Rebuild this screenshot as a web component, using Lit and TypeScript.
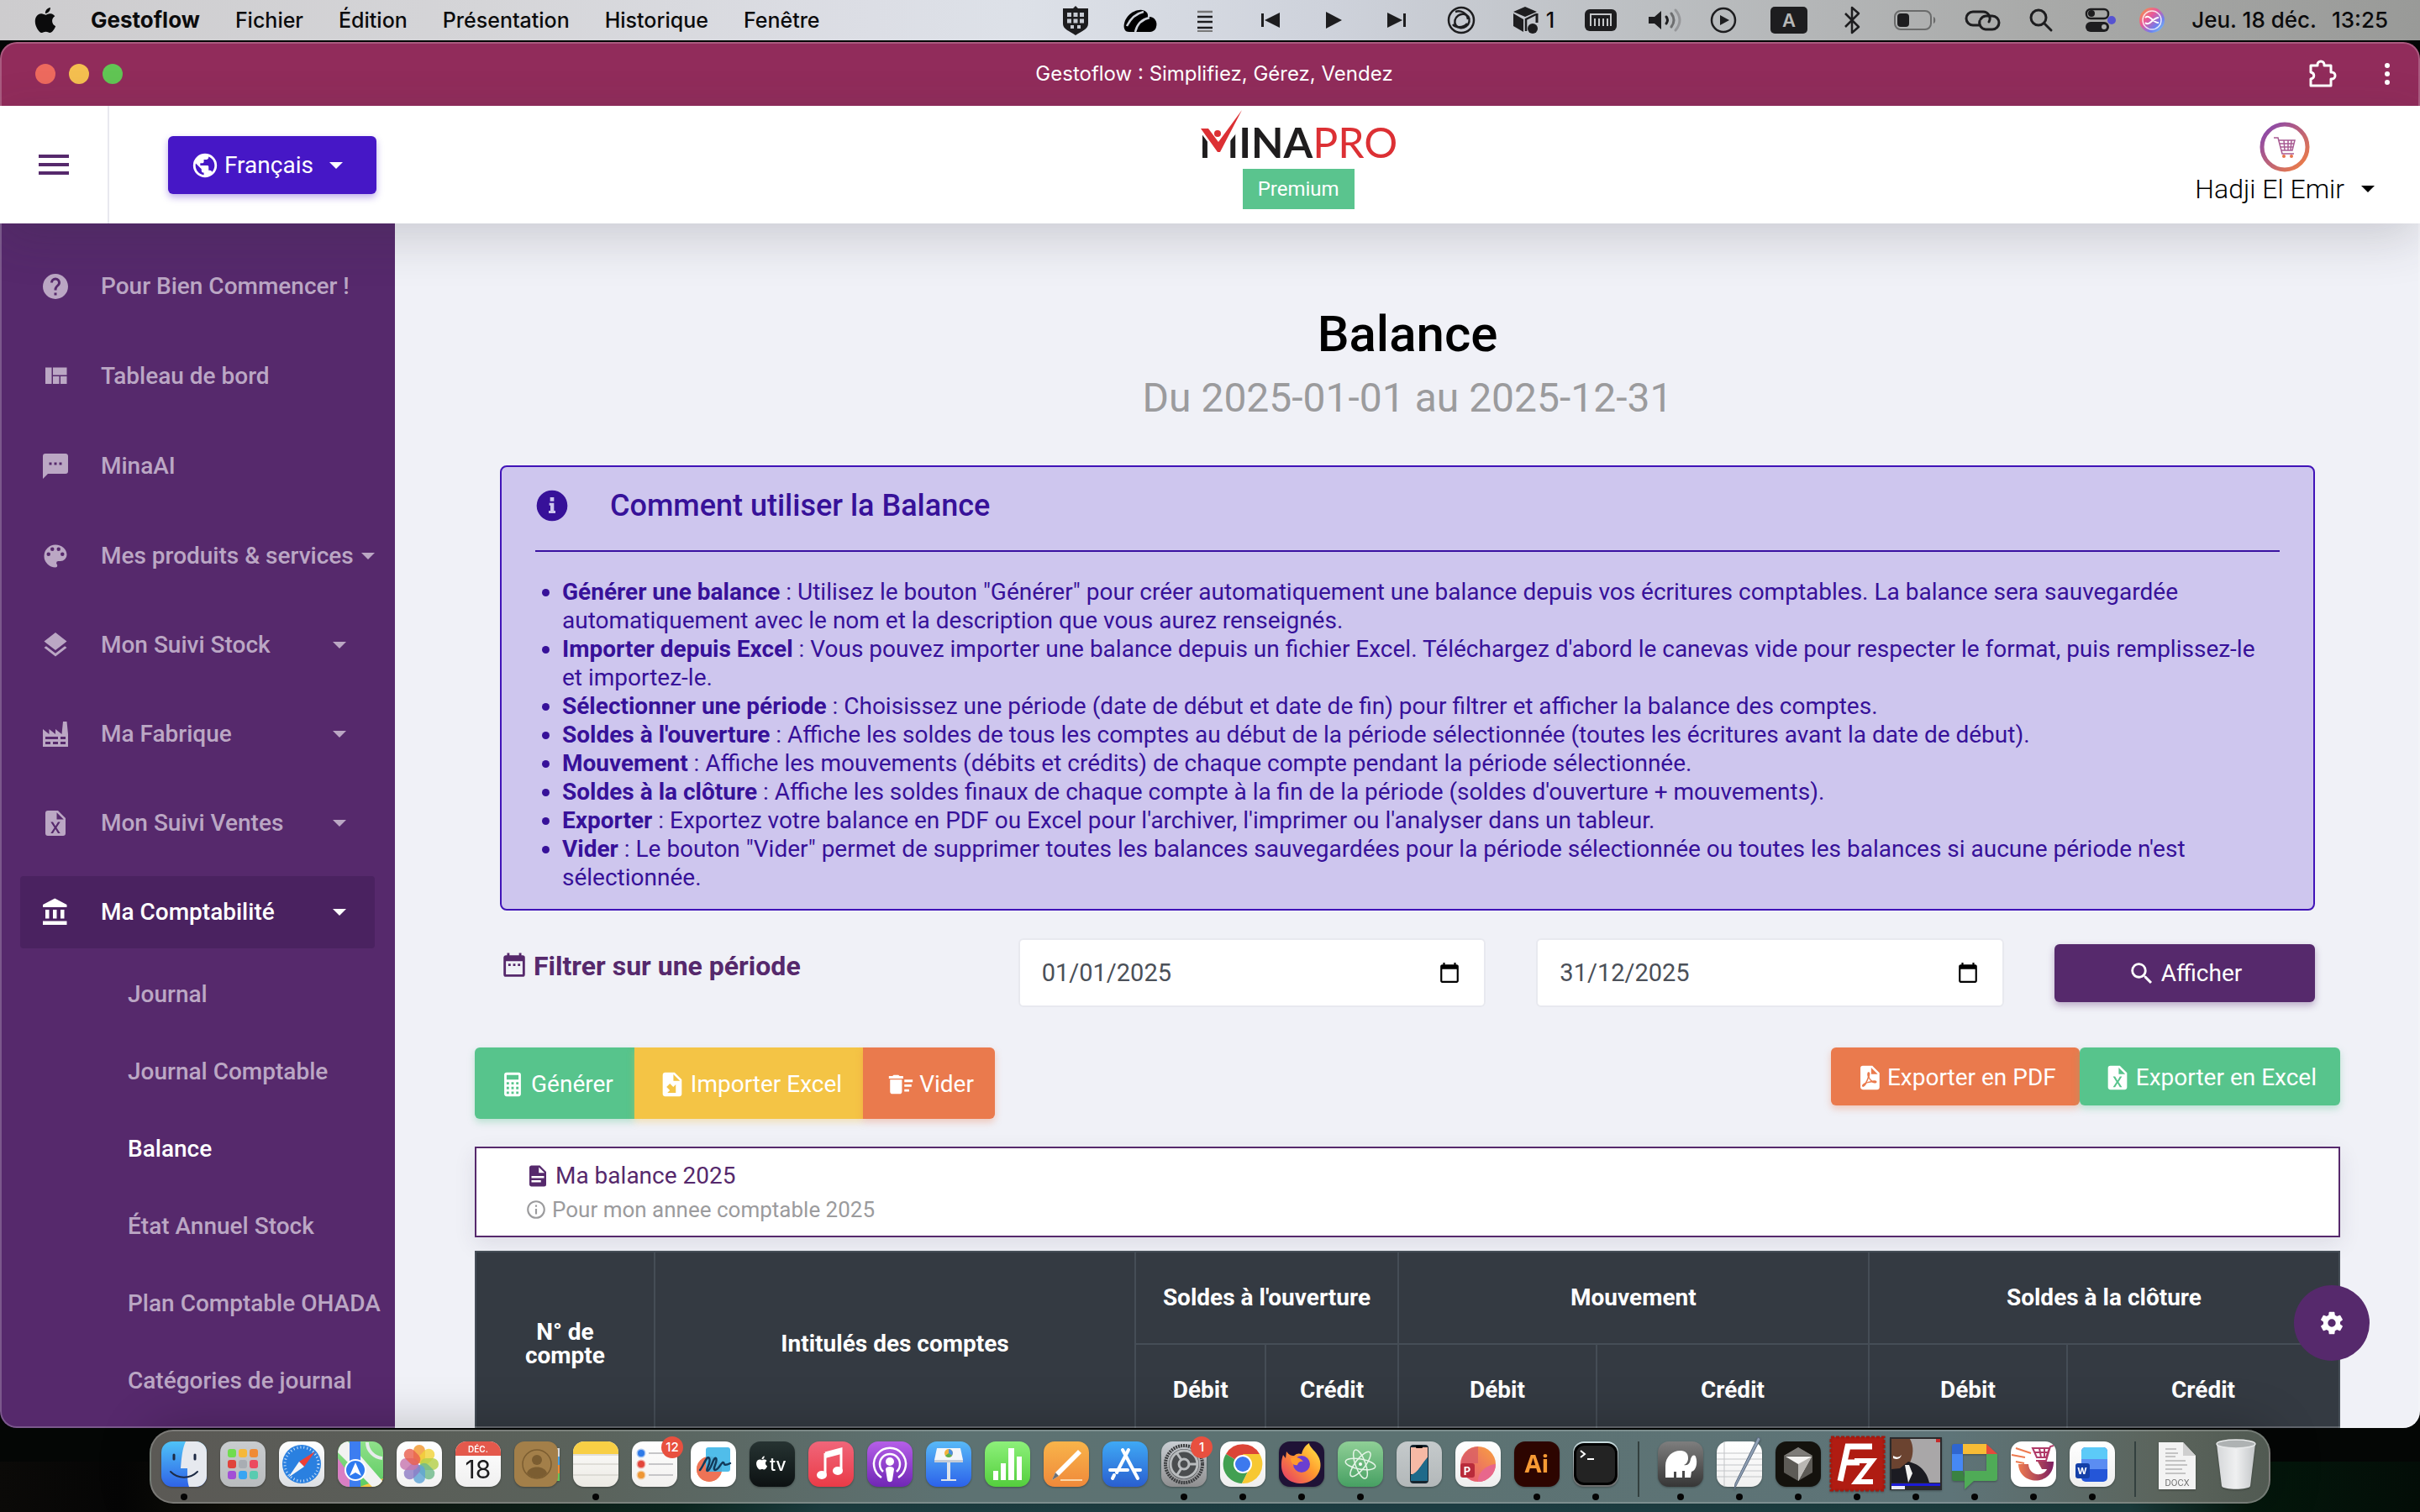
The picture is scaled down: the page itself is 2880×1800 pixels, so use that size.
import { LitElement, html, css, svg, nothing, type TemplateResult, type SVGTemplateResult } from "lit";
import { customElement } from "lit/decorators.js";
import { classMap } from "lit/directives/class-map.js";

/* ---------- Shared icon set (24 x 24 grid) ---------- */

const ICONS: Record<string, string> = {
  help: "M15.07,11.25L14.17,12.17C13.45,12.89 13,13.5 13,15H11V14.5C11,13.39 11.45,12.39 12.17,11.67L13.41,10.41C13.78,10.05 14,9.55 14,9C14,7.89 13.1,7 12,7A2,2 0 0,0 10,9H8A4,4 0 0,1 12,5A4,4 0 0,1 16,9C16,9.88 15.64,10.67 15.07,11.25M13,19H11V17H13M12,2A10,10 0 0,0 2,12A10,10 0 0,0 12,22A10,10 0 0,0 22,12C22,6.47 17.5,2 12,2Z",
  quilt: "M10,5V11H21V5M16,18H21V12H16M4,18H9V5H4M10,18H15V12H10V18Z",
  chat: "M17,11H15V9H17M13,11H11V9H13M9,11H7V9H9M20,2H4A2,2 0 0,0 2,4V22L6,18H20A2,2 0 0,0 22,16V4C22,2.89 21.1,2 20,2Z",
  palette: "M17.5,12A1.5,1.5 0 0,1 16,10.5A1.5,1.5 0 0,1 17.5,9A1.5,1.5 0 0,1 19,10.5A1.5,1.5 0 0,1 17.5,12M14.5,8A1.5,1.5 0 0,1 13,6.5A1.5,1.5 0 0,1 14.5,5A1.5,1.5 0 0,1 16,6.5A1.5,1.5 0 0,1 14.5,8M9.5,8A1.5,1.5 0 0,1 8,6.5A1.5,1.5 0 0,1 9.5,5A1.5,1.5 0 0,1 11,6.5A1.5,1.5 0 0,1 9.5,8M6.5,12A1.5,1.5 0 0,1 5,10.5A1.5,1.5 0 0,1 6.5,9A1.5,1.5 0 0,1 8,10.5A1.5,1.5 0 0,1 6.5,12M12,3A9,9 0 0,0 3,12A9,9 0 0,0 12,21A1.5,1.5 0 0,0 13.5,19.5C13.5,19.11 13.35,18.76 13.11,18.5C12.88,18.23 12.73,17.88 12.73,17.5A1.5,1.5 0 0,1 14.23,16H16A5,5 0 0,0 21,11C21,6.58 16.97,3 12,3Z",
  layers: "M12,16L19.36,10.27L21,9L12,2L3,9L4.63,10.27M12,18.54L4.62,12.81L3,14.07L12,21.07L21,14.07L19.37,12.8L12,18.54Z",
  factory: "M4,18V20H8V18H4M4,14V16H14V14H4M10,18V20H14V18H10M16,14V16H20V14H16M16,18V20H20V18H16M2,22V8L7,12V8L12,12V8L17,12L18,2H21L22,12V22H2Z",
  excel: "M14,2H6A2,2 0 0,0 4,4V20A2,2 0 0,0 6,22H18A2,2 0 0,0 20,20V8L14,2M15.8,20H14L12,16.6L10,20H8.2L11.1,15.5L8.2,11H10L12,14.4L14,11H15.8L12.9,15.5L15.8,20M13,9V3.5L18.5,9H13Z",
  bank: "M11.5,1L2,6V8H21V6M16,10V17H19V10M2,22H21V19H2M10,10V17H13V10M4,10V17H7V10H4Z",
  earth: "M17.9,17.39C17.64,16.59 16.89,16 16,16H15V13A1,1 0 0,0 14,12H8V10H10A1,1 0 0,0 11,9V7H13A2,2 0 0,0 15,5V4.59C17.93,5.77 20,8.64 20,12C20,14.08 19.2,15.97 17.9,17.39M11,19.93C7.05,19.44 4,16.08 4,12C4,11.38 4.08,10.78 4.21,10.21L9,15V16A2,2 0 0,0 11,18M12,2A10,10 0 0,0 2,12A10,10 0 0,0 12,22A10,10 0 0,0 22,12A10,10 0 0,0 12,2Z",
  info: "M10.6,6H13.4V8.8H10.6ZM10,10H13.4V15.6H14.4V17.4H9.6V15.6H10.8V11.8H10ZM12,1A11,11 0 0,0 1,12A11,11 0 0,0 12,23A11,11 0 0,0 23,12A11,11 0 0,0 12,1Z",
  infoOutline: "M11,9H13V7H11M12,20C7.59,20 4,16.41 4,12C4,7.59 7.59,4 12,4C16.41,4 20,7.59 20,12C20,16.41 16.41,20 12,20M12,2A10,10 0 0,0 2,12A10,10 0 0,0 12,22A10,10 0 0,0 22,12A10,10 0 0,0 12,2M11,17H13V11H11V17Z",
  calendar: "M9,10H7V12H9V10M13,10H11V12H13V10M17,10H15V12H17V10M19,3H18V1H16V3H8V1H6V3H5C3.89,3 3,3.9 3,5V19A2,2 0 0,0 5,21H19A2,2 0 0,0 21,19V5A2,2 0 0,0 19,3M19,19H5V8H19V19Z",
  datePicker: "M20,3H19V1H17V3H7V1H5V3H4C2.9,3 2,3.9 2,5V21C2,22.1 2.9,23 4,23H20C21.1,23 22,22.1 22,21V5C22,3.9 21.1,3 20,3M20,21H4V8H20V21Z",
  search: "M9.5,3A6.5,6.5 0 0,1 16,9.5C16,11.11 15.41,12.59 14.44,13.73L14.71,14H15.5L20.5,19L19,20.5L14,15.5V14.71L13.73,14.44C12.59,15.41 11.11,16 9.5,16A6.5,6.5 0 0,1 3,9.5A6.5,6.5 0 0,1 9.5,3M9.5,5C7,5 5,7 5,9.5C5,12 7,14 9.5,14C12,14 14,12 14,9.5C14,7 12,5 9.5,5Z",
  calculator: "M7,2H17A2,2 0 0,1 19,4V20A2,2 0 0,1 17,22H7A2,2 0 0,1 5,20V4A2,2 0 0,1 7,2M7,4V8H17V4H7M7,10V12H9V10H7M11,10V12H13V10H11M15,10V12H17V10H15M7,14V16H9V14H7M11,14V16H13V14H11M15,14V16H17V14H15M7,18V20H9V18H7M11,18V20H13V18H11M15,18V20H17V18H15Z",
  fileImport: "M6,2C4.89,2 4,2.9 4,4V20A2,2 0 0,0 6,22H18A2,2 0 0,0 20,20V8L14,2M13,3.5L18.5,9H13M10.05,11.22L12.88,14.05L15,11.93V19H7.93L10.05,16.88L7.22,14.05",
  sweep: "M15,16H19V18H15V16M15,8H22V10H15V8M15,12H21V14H15V12M3,18A2,2 0 0,0 5,20H11A2,2 0 0,0 13,18V8H3V18M14,5H11L10,4H6L5,5H2V7H14V5Z",
  pdf: "M14,9H19.5L14,3.5V9M7,2H15L21,8V20A2,2 0 0,1 19,22H7C5.89,22 5,21.1 5,20V4A2,2 0 0,1 7,2M11.93,12.44C12.34,13.34 12.86,14.08 13.46,14.59L13.87,14.91C13,15.07 11.8,15.35 10.53,15.84L10.42,15.88L10.92,14.84C11.37,13.97 11.7,13.18 11.93,12.44M18.41,16.25C18.59,16.07 18.68,15.84 18.69,15.59C18.72,15.39 18.67,15.2 18.57,15.04C18.28,14.57 17.53,14.35 16.29,14.35L15,14.42L14.13,13.84C13.5,13.32 12.93,12.41 12.53,11.28L12.57,11.14C12.9,9.81 13.21,8.2 12.55,7.54C12.39,7.38 12.17,7.3 11.94,7.3H11.7C11.33,7.3 11,7.69 10.91,8.07C10.54,9.4 10.76,10.13 11.13,11.34C10.88,12.23 10.56,13.25 10.05,14.28L9.09,16.08L8.2,16.57C7,17.32 6.43,18.16 6.32,18.69C6.28,18.88 6.3,19.05 6.37,19.23L6.4,19.28L6.88,19.59L7.32,19.7C8.13,19.7 9.05,18.75 10.29,16.63L10.47,16.56C11.5,16.23 12.78,16 14.5,15.81C15.53,16.32 16.74,16.55 17.5,16.55C17.94,16.55 18.24,16.44 18.41,16.25Z",
  document: "M13,9H18.5L13,3.5V9M6,2H14L20,8V20A2,2 0 0,1 18,22H6C4.89,22 4,21.1 4,20V4C4,2.89 4.89,2 6,2M15,18V16H6V18H15M18,14V12H6V14H18Z",
  gear: "M12,15.5A3.5,3.5 0 0,1 8.5,12A3.5,3.5 0 0,1 12,8.5A3.5,3.5 0 0,1 15.5,12A3.5,3.5 0 0,1 12,15.5M19.43,12.97C19.47,12.65 19.5,12.33 19.5,12C19.5,11.67 19.47,11.34 19.43,11L21.54,9.37C21.73,9.22 21.78,8.95 21.66,8.73L19.66,5.27C19.54,5.05 19.27,4.96 19.05,5.05L16.56,6.05C16.04,5.66 15.5,5.32 14.87,5.07L14.5,2.42C14.46,2.18 14.25,2 14,2H10C9.75,2 9.54,2.18 9.5,2.42L9.13,5.07C8.5,5.32 7.96,5.66 7.44,6.05L4.95,5.05C4.73,4.96 4.46,5.05 4.34,5.27L2.34,8.73C2.21,8.95 2.27,9.22 2.46,9.37L4.57,11C4.53,11.34 4.5,11.67 4.5,12C4.5,12.33 4.53,12.65 4.57,12.97L2.46,14.63C2.27,14.78 2.21,15.05 2.34,15.27L4.34,18.73C4.46,18.95 4.73,19.03 4.95,18.95L7.44,17.94C7.96,18.34 8.5,18.68 9.13,18.93L9.5,21.58C9.54,21.82 9.75,22 10,22H14C14.25,22 14.46,21.82 14.5,21.58L14.87,18.93C15.5,18.67 16.04,18.34 16.56,17.94L19.05,18.95C19.27,19.03 19.54,18.95 19.66,18.73L21.66,15.27C21.78,15.05 21.73,14.78 21.54,14.63L19.43,12.97Z",
  apple: "M18.71,19.5C17.88,20.74 17,21.95 15.66,21.97C14.32,22 13.89,21.18 12.37,21.18C10.84,21.18 10.37,21.95 9.1,22C7.79,22.05 6.8,20.68 5.96,19.47C4.25,17 2.94,12.45 4.7,9.39C5.57,7.87 7.13,6.91 8.82,6.88C10.1,6.86 11.32,7.75 12.11,7.75C12.89,7.75 14.37,6.68 15.92,6.84C16.57,6.87 18.39,7.1 19.56,8.82C19.47,8.88 17.39,10.1 17.41,12.63C17.44,15.65 20.06,16.66 20.09,16.67C20.06,16.74 19.67,18.11 18.71,19.5M13,3.5C13.73,2.67 14.94,2.04 15.94,2C16.07,3.17 15.6,4.35 14.9,5.19C14.21,6.04 13.07,6.7 11.95,6.61C11.8,5.46 12.36,4.26 13,3.5Z",
};

const icon = (name: string, size: number) => html`
  <svg class="icon" width=${size} height=${size} viewBox="0 0 24 24" aria-hidden="true">
    <path fill="currentColor" fill-rule="evenodd" d=${ICONS[name]}></path>
  </svg>`;

const base = css`
  *, *::before, *::after { box-sizing: border-box; }
  button { font: inherit; color: inherit; background: none; border: 0; padding: 0; cursor: pointer; }
  a { color: inherit; text-decoration: none; }
  svg { display: block; flex: none; overflow: visible; }
  ul { list-style: none; margin: 0; padding: 0; }
  .caret { flex: none; border: 8px solid transparent; border-top-color: currentColor; border-bottom: 0; }
`;

/* ---------- System menu bar ---------- */

interface TrayItem { label: string; width: number; art: SVGTemplateResult; text?: string; }

const TRAY: TrayItem[] = [
  { label: "Protection", width: 44, art: svg`
      <path d="M22 7l3 3h12v18c0 7-8 9-15 14c-7-5-15-7-15-14V10h12z" fill="#1d1d1f"/>
      <path d="M12 15h5v5h-5zM19.500 15h5v5h-5zM27 15h5v5h-5zM12 22.500h5v5h-5zM19.500 22.500h5v5h-5zM27 22.500h5v5h-5zM16 30h4v4h-4zM24 30h4v4h-4z" fill="#c6cad2"/>` },
  { label: "Synchronisation", width: 46, art: svg`
      <path d="M4 34C2 25 10 13 22 12c6-1 11 3 10 8c8-1 12 6 10 12c-1 4-4 6-9 6H10c-3 0-5-1-6-4z" fill="#000"/>
      <path d="M7 31C12 21 18 16 27 14M17 38c2-9 8-15 17-17" stroke="#cfd3da" stroke-width="2.500" fill="none"/>` },
  { label: "Liste", width: 44, art: svg`
      <path d="M13 14h18" stroke="#777" stroke-width="2.500"/><path d="M13 20h18M13 26h18M13 33h18" stroke="#1d1d1f" stroke-width="2.500"/><path d="M13 37h18" stroke="#777" stroke-width="2"/>` },
  { label: "Piste précédente", width: 48, art: svg`<path d="M13 16h3v16h-3zM35 15v18L17 24z" fill="#1d1d1f"/>` },
  { label: "Lecture", width: 38, art: svg`<path d="M10 14v20l19-10z" fill="#1d1d1f"/>` },
  { label: "Piste suivante", width: 48, art: svg`<path d="M32 16h3v16h-3zM13 15v18l18-9z" fill="#1d1d1f"/>` },
  { label: "Creative Cloud", width: 42, art: svg`
      <g fill="none" stroke="#1d1d1f" stroke-width="2.500"><circle cx="21" cy="24" r="15"/><ellipse cx="22" cy="25" rx="9" ry="8" transform="rotate(-35 22 25)"/><path d="M11 29c3 4 12 5 17-1M14 14c6-2 14 1 15 9"/></g>` },
  { label: "Conteneurs", width: 44, text: "1", art: svg`
      <g transform="translate(6 0)"><path d="M17 8l14 6l-14 6L3 14zM3 16l12 7v15L3 31z" fill="#1d1d1f"/><path d="M31 16v11" stroke="#1d1d1f" stroke-width="3"/><path d="M30 17l-12 6v14" fill="none" stroke="#1d1d1f" stroke-width="2.500"/><circle cx="26" cy="34" r="6" fill="#1d1d1f"/></g>` },
  { label: "Clavier", width: 46, art: svg`
      <rect x="4" y="11" width="38" height="26" rx="6" fill="#1d1d1f"/><path d="M11 31V17h24v14M16 22v9M21 22v9M26 22v9M31 22v9" fill="none" stroke="#c4c6c8" stroke-width="2"/>` },
  { label: "Volume", width: 42, art: svg`
      <path d="M2 20h7l8-7v22l-8-7H2z" fill="#1d1d1f"/><g fill="none" stroke-width="3" stroke-linecap="round"><path d="M23 20q3 4 0 8" stroke="#1d1d1f"/><path d="M29 16q6 8 0 16" stroke="#6d6e70"/><path d="M34 12q10 12 0 24" stroke="#96979a"/></g>` },
  { label: "Lecture en cours", width: 34, art: svg`
      <circle cx="17" cy="24" r="14" fill="none" stroke="#1d1d1f" stroke-width="2.500"/><path d="M13 18v12l11-6z" fill="#1d1d1f"/>` },
  { label: "Saisie", width: 58, art: svg`
      <rect x="7" y="8" width="44" height="32" rx="5" fill="#1d1d1f"/><text x="29" y="32" text-anchor="middle" font-family="Inter, sans-serif" font-size="22" font-weight="600" fill="#b6b7b7">A</text>` },
  { label: "Bluetooth", width: 28, art: svg`<path d="M6 16l16 16l-8 7V9l8 7L6 32" fill="none" stroke="#1d1d1f" stroke-width="2.500" stroke-linejoin="round"/>` },
  { label: "Batterie", width: 56, art: svg`
      <rect x="5" y="13" width="43" height="22" rx="7" fill="none" stroke="#6a6b6b" stroke-width="2"/><rect x="8" y="16" width="14" height="16" rx="4" fill="#1d1d1f"/><path d="M51 20c3 1 3 7 0 8z" fill="#6a6b6b"/>` },
  { label: "Partage", width: 42, art: svg`
      <g fill="none" stroke="#1d1d1f" stroke-width="3" stroke-linecap="round"><path d="M17 30h-7a8 8 0 0 1 0-16h12a8 8 0 0 1 7 12"/><path d="M18 25a8 8 0 0 0 7 10h8a8 8 0 0 0 0-16h-8a8 8 0 0 0-6 4"/></g>` },
  { label: "Rechercher", width: 32, art: svg`<circle cx="14" cy="21" r="9" fill="none" stroke="#1d1d1f" stroke-width="3"/><path d="M21 28l8 8" stroke="#1d1d1f" stroke-width="3" stroke-linecap="round"/>` },
  { label: "Centre de contrôle", width: 38, art: svg`
      <rect x="7" y="11" width="26" height="11" rx="5" fill="none" stroke="#1d1d1f" stroke-width="2.500"/><circle cx="13" cy="16" r="4" fill="#1d1d1f"/><rect x="6" y="26" width="28" height="12" rx="6" fill="#1d1d1f"/><circle cx="28" cy="32" r="3" fill="#aeafae"/><circle cx="37" cy="24" r="5" fill="#5653d1"/>` },
  { label: "Siri", width: 30, art: svg`
      <defs><linearGradient id="siri" x1="0" y1="0" x2="1" y2="1"><stop offset="0" stop-color="#f6a13c"/><stop offset=".4" stop-color="#e8589a"/><stop offset=".7" stop-color="#6d7ff0"/><stop offset="1" stop-color="#7fdcf2"/></linearGradient></defs>
      <circle cx="15" cy="24" r="15" fill="url(#siri)"/><circle cx="15" cy="24" r="11" fill="none" stroke="#fff" stroke-width="1.500" opacity=".8"/><path d="M7 21c5-5 10 7 16 6M7 27c5 5 10-7 16-6" stroke="#fff" stroke-width="2" fill="none"/>` },
];

@customElement("menu-bar")
export class MenuBar extends LitElement {
  static styles = [base, css`
    :host {
      display: flex; align-items: center; justify-content: space-between; height: 48px; padding: 0 38px 0 36px;
      font: 500 25px/48px Inter, "Liberation Sans", sans-serif; color: #0b0b0c; white-space: nowrap;
      background: linear-gradient(90deg, #cdccce 0%, #d5d5d8 20%, #dcdee5 36%, #dde1e8 42%, #ced2db 55%, #bcbfc2 68%, #a9aaa9 84%, #999a98 100%);
    }
    nav, .tray, .menus { display: flex; align-items: center; }
    nav { gap: 36px; }
    .menus { gap: 42px; }
    .app { font-weight: 700; font-size: 26px; }
    .tray { gap: 32px; }
    .item { display: flex; align-items: center; gap: 4px; }
    .clock { display: flex; gap: 18px; font-size: 26px; }
  `];

  render() {
    return html`
      <nav aria-label="Menu">
        <button aria-label="Apple">${icon("apple", 36)}</button>
        <div class="menus">
          <button class="app">Gestoflow</button>
          ${["Fichier", "Édition", "Présentation", "Historique", "Fenêtre"].map((m) => html`<button>${m}</button>`)}
        </div>
      </nav>
      <div class="tray">
        ${TRAY.map((t) => html`
          <button class="item" aria-label=${t.label}>
            <svg width=${t.width} height="48" viewBox="0 0 ${t.width} 48" aria-hidden="true">${t.art}</svg>${t.text ? html`<span>${t.text}</span>` : nothing}
          </button>`)}
        <time class="clock"><span>Jeu. 18 déc.</span><span>13:25</span></time>
      </div>`;
  }
}

/* ---------- Sidebar ---------- */

interface NavEntry { label: string; icon: string; group?: boolean; open?: boolean; }

const NAV: NavEntry[] = [
  { label: "Pour Bien Commencer !", icon: "help" },
  { label: "Tableau de bord", icon: "quilt" },
  { label: "MinaAI", icon: "chat" },
  { label: "Mes produits & services", icon: "palette", group: true },
  { label: "Mon Suivi Stock", icon: "layers", group: true },
  { label: "Ma Fabrique", icon: "factory", group: true },
  { label: "Mon Suivi Ventes", icon: "excel", group: true },
  { label: "Ma Comptabilité", icon: "bank", group: true, open: true },
];

const SUBNAV = ["Journal", "Journal Comptable", "Balance", "État Annuel Stock", "Plan Comptable OHADA", "Catégories de journal"];

@customElement("side-nav")
export class SideNav extends LitElement {
  static styles = [base, css`
    :host { display: block; padding: 32px 24px 0; background: #56296c; color: #bba7c4; font: 500 28px/36px Roboto, sans-serif; white-space: nowrap; }
    li { margin-bottom: 21px; }
    li.group { margin-bottom: 20px; }
    .entry { display: flex; align-items: center; height: 86px; padding: 0 34px 0 24px; border-radius: 4px; }
    .entry .icon { margin-right: 36px; }
    .entry .caret { margin-left: auto; }
    .entry.tight { justify-content: space-between; padding-right: 0; }
    .entry.open { background: #4a2260; color: #fff; }
    .entry .text { display: flex; align-items: center; }
    .sub { padding-left: 128px; }
    .sub li { margin: 0; }
    .sub a { display: block; height: 92px; line-height: 92px; }
    .sub.list { margin-top: 9px; }
    .sub .current { color: #fff; }
  `];

  render() {
    return html`
      <nav aria-label="Navigation principale">
        <ul>
          ${NAV.map((n) => html`
            <li class=${classMap({ group: !!n.group })}>
              <a href="#" class=${classMap({ entry: true, open: !!n.open, tight: n.label.length > 22 })}>
                <span class="text">${icon(n.icon, 36)}${n.label}</span>${n.group ? html`<span class="caret"></span>` : nothing}
              </a>
              ${n.open ? html`
                <ul class="sub list">
                  ${SUBNAV.map((s) => html`<li><a href="#" class=${classMap({ current: s === "Balance" })}>${s}</a></li>`)}
                </ul>` : nothing}
            </li>`)}
        </ul>
      </nav>`;
  }
}

/* ---------- Application header ---------- */

@customElement("app-header")
export class AppHeader extends LitElement {
  static styles = [base, css`
    :host { position: relative; z-index: 1; display: flex; align-items: stretch; height: 140px; background: #fff; box-shadow: 0 16px 60px rgba(50, 50, 60, .2); font: 400 28px/40px Roboto, sans-serif; }
    .toggle { display: grid; place-content: center; gap: 6px; width: 130px; padding-top: 0; border-right: 2px solid #e8e8ef; }
    .toggle i { width: 36px; height: 4px; background: #56296c; }
    .lang { display: flex; align-items: center; gap: 6px; align-self: center; height: 69px; margin-left: 70px; padding: 2px 40px 0 27px; border-radius: 6px; background: #4617c6; color: #fff; box-shadow: 0 4px 8px rgba(70, 23, 198, .35); }
    .lang .caret { margin-left: 13px; }
    .brand { display: flex; flex-direction: column; align-items: center; margin: 0 auto; padding: 11px 0 0 30px; }
    .logo { position: relative; font: 700 50px/64px Lato, sans-serif; color: #1f1d1e; }
    .logo .pro { font-weight: 400; color: #dc3034; }
    .logo svg { position: absolute; left: 0; top: -5px; }
    .badge { padding: 0 18px; background: #5ac48e; color: #fff; font-size: 24px; line-height: 48px; }
    .user { display: flex; flex-direction: column; align-items: center; align-self: center; margin: 0 54px 3px 0; }
    .name { display: flex; align-items: center; gap: 20px; font-size: 32px; font-weight: 300; color: #000; }
  `];

  render() {
    return html`
      <button class="toggle" aria-label="Menu"><i></i><i></i><i></i></button>
      <button class="lang">${icon("earth", 34)}<span>Français</span><span class="caret"></span></button>
      <div class="brand">
        <div class="logo">MINA<span class="pro">PRO</span>
          <svg width="52" height="64" viewBox="0 0 52 64" aria-hidden="true">
            <path d="M2 18H44V27L36 37V58H11V38L2 26Z" fill="#fff"/>
            <path d="M2 21h9l12 16L51-1L25 49h-3z" fill="#dc3034"/>
            <circle cx="22" cy="27" r="4" fill="#dc3034"/>
          </svg>
        </div>
        <span class="badge">Premium</span>
      </div>
      <button class="user">
        <svg width="60" height="60" viewBox="0 0 60 60" aria-hidden="true">
          <defs><linearGradient id="ring" x1="0" y1="0" x2="1" y2="1"><stop offset="0" stop-color="#8143b4"/><stop offset="1" stop-color="#f5813f"/></linearGradient></defs>
          <circle cx="30" cy="30" r="27" fill="#fff" stroke="url(#ring)" stroke-width="5"/>
          <g fill="none" stroke="#a85a92" stroke-width="1.500"><path d="M17 19h5l5 19h14"/><path d="M23 22h19l-3 12H26M24 26h17M25 30h15M29 22l1 12M34 22v12M38 22l-1 12"/></g>
          <circle cx="29" cy="41" r="2" fill="#e8734a"/><circle cx="38" cy="41" r="2" fill="#e8734a"/>
        </svg>
        <span class="name">Hadji El Emir <span class="caret"></span></span>
      </button>`;
  }
}

/* ---------- Balance page ---------- */

const HELP: [string, string][] = [
  ["Générer une balance", "Utilisez le bouton \"Générer\" pour créer automatiquement une balance depuis vos écritures comptables. La balance sera sauvegardée automatiquement avec le nom et la description que vous aurez renseignés."],
  ["Importer depuis Excel", "Vous pouvez importer une balance depuis un fichier Excel. Téléchargez d'abord le canevas vide pour respecter le format, puis remplissez-le et importez-le."],
  ["Sélectionner une période", "Choisissez une période (date de début et date de fin) pour filtrer et afficher la balance des comptes."],
  ["Soldes à l'ouverture", "Affiche les soldes de tous les comptes au début de la période sélectionnée (toutes les écritures avant la date de début)."],
  ["Mouvement", "Affiche les mouvements (débits et crédits) de chaque compte pendant la période sélectionnée."],
  ["Soldes à la clôture", "Affiche les soldes finaux de chaque compte à la fin de la période (soldes d'ouverture + mouvements)."],
  ["Exporter", "Exportez votre balance en PDF ou Excel pour l'archiver, l'imprimer ou l'analyser dans un tableur."],
  ["Vider", "Le bouton \"Vider\" permet de supprimer toutes les balances sauvegardées pour la période sélectionnée ou toutes les balances si aucune période n'est sélectionnée."],
];

@customElement("balance-page")
export class BalancePage extends LitElement {
  static styles = [base, css`
    :host { display: block; padding: 96px 95px 0; background: #f0f1f7; font: 400 28px/34px Roboto, sans-serif; color: #4b5058; }
    h1 { margin: 0 0 11px; font-size: 60px; line-height: 72px; font-weight: 500; color: #000; text-align: center; }
    .range { margin: 0 0 51px; font-size: 48px; line-height: 58px; text-align: center; color: #9b9b9d; }
    .help { margin: 0 30px; padding: 24px 40px 20px; border: 2px solid #4013b8; border-radius: 8px; background: #cec6ee; color: #371199; }
    .help h2 { display: flex; align-items: center; gap: 49px; margin: 0; padding-bottom: 31px; border-bottom: 2px solid #3a12a0; font-size: 36px; line-height: 44px; font-weight: 500; }
    .help ul { list-style: disc; margin-top: 31px; padding-left: 32px; }
    .filter { display: grid; grid-template-columns: repeat(3, 10fr) 6fr; align-items: center; margin-top: 33px; }
    .filter > * { margin: 0 30px; }
    .title { display: flex; align-items: center; gap: 6px; align-self: start; font-size: 32px; line-height: 66px; font-weight: 700; color: #56296c; }
    .date { display: flex; align-items: center; height: 82px; padding: 0 28px 0 26px; border: 2px solid #e8e9ef; border-radius: 6px; background: #fff; }
    .date input { flex: 1; min-width: 0; border: 0; padding: 0; background: none; font: inherit; font-size: 29px; color: #4b5058; outline: 0; }
    .date button { color: #000; }
    .btn { display: flex; align-items: center; justify-content: center; gap: 5px; height: 69px; padding: 2px 28px 0; border-radius: 6px; color: #fff; white-space: nowrap; }
    .purple { background: #56296c; box-shadow: 0 4px 8px rgba(86, 41, 108, .35); gap: 6px; }
    .green { background: #57c48c; box-shadow: 0 4px 8px rgba(87, 196, 140, .35); }
    .yellow { background: #f4c445; box-shadow: 0 4px 8px rgba(244, 196, 69, .35); }
    .orange { background: #ea7a4d; box-shadow: 0 4px 8px rgba(234, 122, 77, .35); }
    .actions { display: flex; justify-content: space-between; align-items: flex-start; margin-top: 48px; }
    .set { display: flex; }
    .joined .btn { height: 85px; border-radius: 0; padding: 2px 25px 0 28px; }
    .joined .btn:first-child { border-radius: 6px 0 0 6px; }
    .joined .btn:last-child { border-radius: 0 6px 6px 0; }
    .card { margin-top: 33px; padding: 13px 58px 11px; border: 2px solid #56296c; background: #fff; box-shadow: 0 8px 24px rgba(60, 50, 80, .1); line-height: 40px; }
    .card div { display: flex; align-items: center; gap: 6px; }
    .card .name { color: #56296c; }
    .card .note { color: #9b9b9d; font-size: 26px; }
    table { width: 100%; margin-top: 16px; table-layout: fixed; border-collapse: collapse; background: #343a42; color: #fff; position: relative; }
    th { height: 110px; padding: 0 24px; border: 2px solid #454d56; font-weight: 700; font-size: 28px; line-height: 28px; text-align: center; }
    .c1 { width: 9.6%; } .c2 { width: 25.8%; } .c3 { width: 7%; } .c4 { width: 7.1%; } .c5, .c7 { width: 10.65%; } .c6 { width: 14.6%; }
  `];

  private dateField(id: string, label: string, value: string): TemplateResult {
    return html`
      <div class="date">
        <input id=${id} type="text" inputmode="numeric" aria-label=${label} .value=${value}>
        <button type="button" aria-label="Ouvrir le calendrier">${icon("datePicker", 26)}</button>
      </div>`;
  }

  render() {
    return html`
      <h1>Balance</h1>
      <p class="range">Du 2025-01-01 au 2025-12-31</p>
      <section class="help">
        <h2>${icon("info", 40)}Comment utiliser la Balance</h2>
        <ul>${HELP.map(([k, v]) => html`<li><b>${k}</b> : ${v}</li>`)}</ul>
      </section>
      <form class="filter">
        <label class="title" for="from">${icon("calendar", 34)}Filtrer sur une période</label>
        ${this.dateField("from", "Date de début", "01/01/2025")}
        ${this.dateField("to", "Date de fin", "31/12/2025")}
        <button class="btn purple" type="button">${icon("search", 34)}Afficher</button>
      </form>
      <div class="actions">
        <div class="set joined">
          <button class="btn green">${icon("calculator", 34)}Générer</button>
          <button class="btn yellow">${icon("fileImport", 34)}Importer Excel</button>
          <button class="btn orange">${icon("sweep", 34)}Vider</button>
        </div>
        <div class="set">
          <button class="btn orange">${icon("pdf", 34)}Exporter en PDF</button>
          <button class="btn green">${icon("excel", 34)}Exporter en Excel</button>
        </div>
      </div>
      <section class="card">
        <div class="name">${icon("document", 30)}Ma balance 2025</div>
        <div class="note">${icon("infoOutline", 26)}Pour mon annee comptable 2025</div>
      </section>
      <table>
        <colgroup>${[1, 2, 3, 4, 5, 6, 7, 8].map((n) => html`<col class="c${n}">`)}</colgroup>
        <thead>
          <tr>
            <th rowspan="2">N° de compte</th>
            <th rowspan="2">Intitulés des comptes</th>
            <th colspan="2">Soldes à l'ouverture</th>
            <th colspan="2">Mouvement</th>
            <th colspan="2">Soldes à la clôture</th>
          </tr>
          <tr>${[0, 1, 2].map(() => html`<th>Débit</th><th>Crédit</th>`)}</tr>
        </thead>
      </table>`;
  }
}

/* ---------- Dock ---------- */

interface DockApp { name: string; art: SVGTemplateResult; running?: boolean; badge?: string; }

/* Rounded tile with a vertical gradient, used as the base of most app icons. */
const tile = (id: string, top: string, bottom: string) => svg`
  <defs><linearGradient id=${id} x1="0" y1="0" x2="0" y2="1"><stop offset="0" stop-color=${top}/><stop offset="1" stop-color=${bottom}/></linearGradient></defs>
  <rect width="54" height="54" rx="13" fill="url(#${id})"/>`;

const PETALS = ["#f3982f", "#f2d33b", "#b5cf4a", "#6fb98a", "#5fa3d6", "#8d7cc4", "#c778b0", "#e9604f"];
const GRID = ["#6fdc4e", "#f5b83a", "#f08a35", "#e0433b", "#a8adb3", "#ec4a5f", "#a24fd6", "#39a5f2", "#59cbb0"];

const APPS: DockApp[][] = [
  [
    { name: "Finder", running: true, art: svg`${tile("finder", "#4fc3f8", "#2f63e6")}
      <path d="M29 0h12a13 13 0 0 1 13 13v28a13 13 0 0 1-13 13h-8c-2-6-2-12-2-22h-8C24 20 25 8 29 0z" fill="#e6e9ef"/>
      <path d="M15 16v5M40 16v5" stroke="#1d2b45" stroke-width="3" stroke-linecap="round"/><path d="M11 36c9 9 23 9 32 0" stroke="#1d2b45" stroke-width="2" fill="none" stroke-linecap="round"/>` },
    { name: "Launchpad", art: svg`${tile("launch", "#c9cccf", "#b9bcbe")}
      ${GRID.map((c, i) => svg`<rect x=${9 + (i % 3) * 13} y=${9 + Math.floor(i / 3) * 13} width="10" height="10" rx="3" fill=${c}/>`)}` },
    { name: "Safari", art: svg`${tile("safari", "#ffffff", "#dcdfe3")}<circle cx="27" cy="27" r="23" fill="#2a80e0"/>
      <circle cx="27" cy="27" r="20" fill="none" stroke="#cfe4fa" stroke-width="3" stroke-dasharray="1 3"/>
      <path d="M43 12L30 30l-6-6z" fill="#ee4037"/><path d="M11 43l13-19l6 6z" fill="#f3f5f7"/>` },
    { name: "Plans", art: svg`${tile("maps", "#8fe08a", "#5ecb62")}
      <path d="M0 20l24 34H13A13 13 0 0 1 0 41z" fill="#d97ec4"/><path d="M54 44a13 13 0 0 1-13 10H26z" fill="#f5c844"/>
      <path d="M0 13l41 41q8 0 12-7L12 0Q2 1 0 13z" fill="#f2f2f2"/><path d="M14 0h13v54H14z" fill="#3d7df0"/><path d="M35 1c0 10 8 18 18 19" fill="none" stroke="#e7ebec" stroke-width="4"/>
      <circle cx="21" cy="34" r="13" fill="#fff"/><circle cx="21" cy="34" r="11" fill="#2f7af0"/><path d="M21 25l7 16l-7-4l-7 4z" fill="#fff"/>` },
    { name: "Photos", art: svg`${tile("photos", "#ffffff", "#f2f2f2")}
      ${PETALS.map((c, i) => svg`<rect x="20" y="4" width="14" height="22" rx="7" fill=${c} opacity=".82" transform="rotate(${i * 45} 27 27)"/>`)}` },
    { name: "Calendrier", art: svg`${tile("cal", "#ffffff", "#f0f0f0")}<path d="M0 17V13A13 13 0 0 1 13 0h28a13 13 0 0 1 13 13v4z" fill="#e4594c"/>
      <text x="27" y="13" text-anchor="middle" font-family="Inter, sans-serif" font-weight="600" font-size="10" fill="#fff">DÉC.</text>
      <text x="27" y="44" text-anchor="middle" font-family="Inter, sans-serif" font-size="30" fill="#1d1d1f">18</text>` },
    { name: "Contacts", art: svg`<path d="M49 8h5v10h-5z" fill="#d9dbde"/><path d="M49 18h5v10h-5z" fill="#4a9fe0"/><path d="M49 28h5v10h-5z" fill="#ef8b34"/><path d="M49 38h5v9h-5z" fill="#67c457"/>
      <rect width="52" height="54" rx="12" fill="#a37f49"/><circle cx="27" cy="27" r="17" fill="none" stroke="#7b5d31" stroke-width="1.500"/><circle cx="27" cy="22" r="6" fill="#7b5d31"/><path d="M15 38c2-10 22-10 24 0c-6 7-18 7-24 0z" fill="#7b5d31"/>` },
    { name: "Notes", running: true, art: svg`${tile("notes", "#fdfdfc", "#eceae4")}<path d="M0 15v-2A13 13 0 0 1 13 0h28a13 13 0 0 1 13 13v2z" fill="#f8cf45"/>
      <path d="M0 16h54M0 27h54M0 40h54" stroke="#c9c7c0" stroke-width="1"/>` },
    { name: "Rappels", badge: "12", art: svg`${tile("remind", "#ffffff", "#f1f0ee")}
      ${["#2f7be8", "#e3463b", "#ee9735"].map((c, i) => svg`<circle cx="11" cy=${14 + i * 13} r="4" fill=${c} stroke=${c} stroke-opacity=".4" stroke-width="3"/><path d="M20 ${14 + i * 13}h29" stroke="#c6c6c8" stroke-width="2"/>`)}` },
    { name: "Freeform", art: svg`${tile("freeform", "#ffffff", "#ffffff")}<circle cx="22" cy="33" r="15" fill="#f09445"/><path d="M7 33a15 15 0 0 1 30 0a15 15 0 0 1-15 15a15 15 0 0 1-15-15" fill="#ee6a5a" opacity=".8"/><rect x="18" y="7" width="29" height="29" rx="3" fill="#3db6e8" opacity=".9"/>
      <path d="M11 34c4-4 8-18 11-14c3 4-5 15-2 15c4 0 7-17 10-15c3 3-5 13-1 14c4 0 7-8 9-9c3-1-1 6 9 1" fill="none" stroke="#123a5a" stroke-width="2.500" stroke-linecap="round"/>` },
    { name: "Apple TV", art: svg`${tile("tv", "#263332", "#0c1112")}<path transform="translate(5 16) scale(.8)" d=${ICONS.apple} fill="#fff"/>
      <text x="24" y="35" font-family="Inter, sans-serif" font-size="21" font-weight="500" fill="#fff">tv</text>` },
    { name: "Musique", art: svg`${tile("music", "#f0667a", "#ea3b47")}<path d="M20 14l19-5v26M20 14v25" fill="none" stroke="#fff" stroke-width="3"/><path d="M20 14l19-5v6l-19 5z" fill="#fff"/><ellipse cx="16" cy="40" rx="6" ry="5" fill="#fff"/><ellipse cx="35" cy="35" rx="6" ry="5" fill="#fff"/>` },
    { name: "Podcasts", art: svg`${tile("pod", "#b55fe8", "#7027b5")}<g fill="none" stroke="#fff" stroke-width="2.500"><path d="M17 43a19 19 0 1 1 20 0"/><path d="M19 36a12 12 0 1 1 16 0"/></g><circle cx="27" cy="24" r="5" fill="#fff"/><path d="M22 33c0-4 10-4 10 0l-2 13c-1 3-5 3-6 0z" fill="#fff"/>` },
    { name: "Keynote", art: svg`${tile("key", "#58b9f7", "#2c62ea")}<path d="M13 8h28l3 14H10z" fill="#f4f6fa"/><path d="M10 22h34v3H10z" fill="#c4cbd6"/><path d="M25 25h4v20h-4zM18 45h18v2H18z" fill="#dfe4eb"/><circle cx="27" cy="14" r="5" fill="#f3b23e"/><path d="M27 14V9a5 5 0 0 1 4 8z" fill="#4a90e2"/><path d="M27 14l4 3a5 5 0 0 1-8 0z" fill="#59b04f"/>` },
    { name: "Numbers", art: svg`${tile("num", "#8df07a", "#54cf3d")}<path d="M10 35h6v11h-6zM19 26h6v20h-6zM28 8h7v38h-7zM38 18h6v28h-6z" fill="#fff"/>` },
    { name: "Pages", art: svg`${tile("pages", "#f8b44a", "#f0893a")}<path d="M41 10l4 4l-27 27l-8 5l4-9z" fill="#fff"/><path d="M10 46l4-9l4 4z" fill="#6b6f76"/><path d="M20 46h26" stroke="#fbd6a8" stroke-width="2"/>` },
    { name: "App Store", art: svg`${tile("store", "#3fa9f5", "#2a5fd0")}<g stroke="#fff" stroke-width="4" stroke-linecap="round"><path d="M31 10L17 37M24 10l18 34M9 34h21M37 34h8M14 40l-2 4"/></g>` },
    { name: "Réglages", running: true, badge: "1", art: svg`${tile("sett", "#c9ced3", "#8f8f90")}<circle cx="27" cy="27" r="22" fill="none" stroke="#3a3c3e" stroke-width="4" stroke-dasharray="2 1"/><circle cx="27" cy="27" r="18" fill="#4a4d4f"/>
      <circle cx="27" cy="27" r="16" fill="none" stroke="#b9bcbe" stroke-width="3"/><circle cx="27" cy="27" r="6" fill="none" stroke="#b9bcbe" stroke-width="3"/><path d="M33 27h11M24 22l-6-9M24 32l-6 9" stroke="#b9bcbe" stroke-width="3"/>` },
    { name: "Chrome", running: true, art: svg`${tile("chrome", "#ffffff", "#eeeeee")}<path d="M27 27L7 15a23 23 0 0 1 40 0z" fill="#dc4436"/><path d="M7 15a23 23 0 0 0 19 35l9-18L27 27z" fill="#42a051"/><path d="M47 15H27l8 17l-9 18a23 23 0 0 0 21-35z" fill="#f7c832"/><circle cx="27" cy="27" r="11" fill="#fff"/><circle cx="27" cy="27" r="9" fill="#3d79ee"/>` },
    { name: "Firefox", running: true, art: svg`${tile("ff", "#1f1236", "#1f1236")}
      <defs><linearGradient id="flame" x1="1" y1="0" x2="0" y2="1"><stop offset="0" stop-color="#fff04a"/><stop offset=".45" stop-color="#ff9a2e"/><stop offset="1" stop-color="#e3316f"/></linearGradient></defs>
      <path d="M5 16l3 4l1-8c3 4 5 5 9 5c3-3 6-3 9-2c1-5 4-10 9-13c0 5 9 10 12 18c6 16-7 30-21 30S2 42 3 26c0-4 1-7 2-10z" fill="url(#flame)"/><circle cx="27" cy="27" r="10" fill="#6b3fd0"/><path d="M14 20c6-3 12 0 15 4c-4-1-6 1-7 4c-4 1-8-2-8-8z" fill="#ff9a2e"/>` },
    { name: "Atom", running: true, art: svg`${tile("atom", "#8fcf96", "#47a063")}<g fill="none" stroke="#e5f4e7" stroke-width="1.500"><ellipse cx="27" cy="27" rx="18" ry="6" transform="rotate(10 27 27)"/><ellipse cx="27" cy="27" rx="18" ry="6" transform="rotate(70 27 27)"/><ellipse cx="27" cy="27" rx="18" ry="6" transform="rotate(128 27 27)"/></g><circle cx="27" cy="27" r="2" fill="#fff"/>` },
    { name: "iPhone", art: svg`${tile("iph", "#c5cacc", "#b3b8b9")}<rect x="16" y="4" width="22" height="46" rx="4" fill="#16252f"/><path d="M17 7h20v12L22 39h-5z" fill="#f6b9a5"/><path d="M37 19v28H17v-7c9-3 13-14 20-21z" fill="#1f6a8a"/><rect x="23" y="5" width="8" height="3" rx="1" fill="#000"/>` },
    { name: "PowerPoint", art: svg`
      <defs><linearGradient id="pie" x1="1" y1="0" x2="0" y2="1"><stop offset="0" stop-color="#f8a23f"/><stop offset="1" stop-color="#e4507a"/></linearGradient></defs>${tile("ppt", "#ffffff", "#eeeeee")}
      <circle cx="27" cy="27" r="21" fill="url(#pie)"/><path d="M27 6a21 21 0 0 0-20 20h20z" fill="#d65a68" opacity=".7"/><path d="M48 27a21 21 0 0 1-21 21c-1-9 8-20 21-21z" fill="#e8678c"/><rect x="6" y="26" width="17" height="17" rx="3" fill="#b92b3b"/>
      <text x="14" y="40" text-anchor="middle" font-family="Inter, sans-serif" font-weight="700" font-size="13" fill="#fff">P</text>` },
    { name: "Illustrator", running: true, art: svg`${tile("ai", "#2d0500", "#2d0500")}<text x="27" y="37" text-anchor="middle" font-family="'Open Sans', sans-serif" font-weight="700" font-size="29" fill="#f79a34">Ai</text>` },
    { name: "Terminal", running: true, art: svg`${tile("term", "#c8dde0", "#6c6c6c")}<rect x="1" y="2" width="52" height="50" rx="12" fill="#000"/><rect x="4" y="5" width="46" height="44" rx="9" fill="#232323"/><path d="M9 11l5 4l-5 4M17 21h8" fill="none" stroke="#fff" stroke-width="2"/>` },
  ],
  [
    { name: "MAMP", running: true, art: svg`${tile("mamp", "#7e7e7e", "#363636")}<path d="M9 43V29c0-12 10-19 19-18c7 1 8 5 8 9c0 4-2 7-5 8c5 1 7-2 8-7c1-4 4-6 6-3c3 8 0 17-5 18l-1 7h-7v-8h-3v8h-7v-7h-3v7z" fill="#fff"/>` },
    { name: "TextEdit", running: true, art: svg`${tile("txt", "#ffffff", "#f0f0f0")}<path d="M0 14h54M0 21h54M0 28h54M0 35h54M0 42h54M9 0v54" stroke="#c3c5c8" stroke-width="1"/><path d="M49-5l3 2L24 51l-3 6l1-7z" fill="#8fa0b5" stroke="#5d6c80" stroke-width="1"/>` },
    { name: "Cursor", running: true, art: svg`${tile("cursor", "#14120d", "#14120d")}<path d="M27 7l17 10v20L27 47L10 37V17z" fill="#5d5b56"/><path d="M27 7l17 10H10z" fill="#7e7c78"/><path d="M12 18h31L27 47V27z" fill="#f4f3f1"/><path d="M27 27L43 18L27 47z" fill="#b9b7b3"/>` },
    { name: "FileZilla", running: true, art: svg`<rect x="-4" y="-5" width="63" height="63" fill="#b01c12" stroke="#a3190f" stroke-width="3" stroke-dasharray="4 2"/><g fill="none" stroke="#fff" stroke-width="7"><path d="M45 6H16L7 47M12 25h18"/><path d="M24 23h21L26 48h20" stroke-width="6"/></g>` },
    { name: "Aperçu", running: true, art: svg`<rect x="-4" y="-5" width="62" height="63" fill="#2a2a2c"/><path d="M-2-3h58v52H-2z" fill="#a9a7a8"/><path d="M-2 34V-3h22c5 9 4 20 0 28c-4 8-12 12-22 9z" fill="#6b4330"/><path d="M-2 49V33l10-1l10-8c14 3 22 12 25 25z" fill="#1b1b22"/><path d="M14 28h5l4 10l-5 11z" fill="#f2f2f2"/><path d="M0 17q6 4 10-1q-2 7-10 4z" fill="#fff"/><path d="M-2 50h58v3H-2z" fill="#1c1bd6"/><path d="M-2 53h16v4H-2z" fill="#e9e9f4"/><path d="M51-3h5v4h-5z" fill="#c62b2b"/>` },
    { name: "Google Chat", running: true, art: svg`<path d="M0 15V6a3 3 0 0 1 3-3h10v12z" fill="#2f66d0"/><path d="M13 3h28v12H13z" fill="#f7bc35"/><path d="M41 3l13 12H41z" fill="#e4493b"/><path d="M0 15h13v20H0z" fill="#4688f4"/><path d="M0 35h13l3 12H3a3 3 0 0 1-3-3z" fill="#3a8242"/><path d="M41 15h13v29a3 3 0 0 1-3 3H26L15 57V35h26z" fill="#4fab57"/>` },
    { name: "Gestoflow", running: true, art: svg`<defs><linearGradient id="gest" x1="0" y1="0" x2="1" y2="0"><stop offset="0" stop-color="#ee7a4f"/><stop offset="1" stop-color="#7d1f62"/></linearGradient></defs><rect width="54" height="54" rx="13" fill="#fff"/>
      <path d="M9 27c1 26 42 27 42-3H32l5 9h6c-4 9-21 9-22-6z" fill="url(#gest)"/><g fill="none" stroke="#b03a68" stroke-width="2"><path d="M51 5l-4 1l-5 17H30M26 8h20l-4 11H31zM29 13h15M34 8l2 11M40 8v11"/></g><path d="M6 8l18 6M1 16l16 3M6 24l10 2" stroke="#ee7a4f" stroke-width="2"/>` },
    { name: "Word", running: true, art: svg`${tile("word", "#ffffff", "#eeeeee")}<rect x="14" y="7" width="31" height="41" rx="5" fill="#2456d8"/><path d="M14 12a5 5 0 0 1 5-5h21a5 5 0 0 1 5 5v10H14z" fill="#5ccaf8"/><path d="M14 21h31v12H14z" fill="#5b8df2"/><rect x="7" y="26" width="17" height="18" rx="3" fill="#1440a8"/>
      <text x="15" y="39" text-anchor="middle" font-family="Inter, sans-serif" font-weight="700" font-size="11" fill="#fff">W</text>` },
  ],
  [
    { name: "Document DOCX", art: svg`<path d="M5 1h29l15 16v40H5z" fill="#f3f3f3"/><path d="M34 1l15 16H34z" fill="#cfcfcf"/><path d="M13 9h13M13 14h15M13 18h12M13 23h24M13 28h26M13 33h20M13 38h24" stroke="#b5b5b5" stroke-width="1.500"/>
      <text x="27" y="53" text-anchor="middle" font-family="Inter, sans-serif" font-size="10" fill="#6a6a6a">DOCX</text>` },
    { name: "Corbeille", art: svg`<defs><linearGradient id="bin" x1="0" y1="0" x2="1" y2="0"><stop offset="0" stop-color="#d5d7d9"/><stop offset=".5" stop-color="#eff0f1"/><stop offset="1" stop-color="#c3c6c8"/></linearGradient></defs>
      <path d="M4 3h46l-6 50c-1 5-33 5-34 0z" fill="url(#bin)"/><ellipse cx="27" cy="3" rx="23" ry="5" fill="#aeb2b3" stroke="#e7e9ea" stroke-width="1.500"/>` },
  ],
];

@customElement("app-dock")
export class AppDock extends LitElement {
  static styles = [base, css`
    :host {
      position: relative; display: flex; height: 88px; padding: 0 4px; border: 2px solid rgba(255, 255, 255, .2); border-radius: 28px;
      background: linear-gradient(90deg, #5b5955 0%, #5a625b 20%, #5d7272 38%, #5c7272 60%, #5e7478 85%, #5b645c 95%, #515a52 100%);
      box-shadow: 0 0 60px rgba(0, 0, 0, .25);
    }
    .apps { display: flex; }
    .app { position: relative; display: flex; flex-direction: column; align-items: center; gap: 8px; width: 70px; padding-top: 12px; }
    .app svg { filter: drop-shadow(0 1px 1px rgba(0, 0, 0, .3)); }
    .dot { width: 8px; height: 8px; border-radius: 50%; background: #050505; }
    .badge { position: absolute; top: 6px; right: 1px; min-width: 26px; border-radius: 13px; background: #e8503f; color: #fff; font: 500 15px/26px Inter, sans-serif; text-align: center; }
    .sep { width: 2px; margin: 12px 14px 6px 15px; background: #33403f; }
  `];

  render() {
    return APPS.map((group, i) => html`
      ${i ? html`<div class="sep"></div>` : nothing}
      <div class="apps">
        ${group.map((a) => html`
          <button class="app" aria-label=${a.name}>
            <svg width="54" height="54" viewBox="0 0 54 54" aria-hidden="true">${a.art}</svg>
            ${a.running ? html`<span class="dot"></span>` : nothing}
            ${a.badge ? html`<span class="badge">${a.badge}</span>` : nothing}
          </button>`)}
      </div>`);
  }
}

/* ---------- Desktop ---------- */

@customElement("app-root")
export class AppRoot extends LitElement {
  static styles = [base, css`
    :host {
      display: flex; flex-direction: column; height: 100vh; overflow: hidden; background-color: #040605;
      background-image: linear-gradient(90deg, #0b0a08 0%, #050505 5%, #12120b 10%, #0d2a22 28%, #1f4245 34%, #20444a 60%, #1d4040 88%, #04180c 93%, #030d07 100%);
      background-size: 100% 60px; background-position: bottom; background-repeat: no-repeat;
    }
    .window {
      position: relative; flex: 1; min-height: 0; display: flex; flex-direction: column; margin: 2px 0; overflow: hidden;
      border-radius: 20px;
    }
    .window::after { content: ""; position: absolute; inset: 0; z-index: 3; border: 2px solid rgba(255, 255, 255, .22); border-radius: 20px; pointer-events: none; }
    .titlebar { display: grid; grid-template-columns: 1fr auto 1fr; align-items: center; height: 76px; padding: 0 32px 0 42px; background: #912c5b; color: #fff; font: 400 24px/30px Inter, "Liberation Sans", sans-serif; }
    .lights, .tools { display: flex; align-items: center; }
    .lights { gap: 16px; }
    .lights button { width: 24px; height: 24px; border-radius: 50%; }
    .close { background: #ed6a5e; } .min { background: #f4bf50; } .max { background: #61c554; }
    .tools { justify-content: flex-end; gap: 54px; }
    .body { flex: 1; min-height: 0; display: grid; grid-template-columns: 470px minmax(0, 1fr); }
    side-nav, balance-page { min-height: 0; overflow: hidden; }
    .fab { position: absolute; z-index: 2; right: 60px; bottom: 80px; display: grid; place-items: center; width: 90px; height: 90px; border-radius: 50%; background: #56296c; color: #fff; }
    app-dock { align-self: center; margin-bottom: 10px; flex: none; }
    menu-bar, app-header, .titlebar { flex: none; }
  `];

  render() {
    return html`
      <menu-bar></menu-bar>
      <div class="window">
        <div class="titlebar">
          <div class="lights">
            <button class="close" aria-label="Fermer"></button>
            <button class="min" aria-label="Réduire"></button>
            <button class="max" aria-label="Agrandir"></button>
          </div>
          <span>Gestoflow : Simplifiez, Gérez, Vendez</span>
          <div class="tools">
            <button aria-label="Extensions">
              <svg width="34" height="34" viewBox="0 0 34 34" aria-hidden="true"><path d="M4 7h8v-1a4 4 0 0 1 8 0v1h8v8h1a4 4 0 0 1 0 8h-1v8H4v-8c5-1 5-7 0-8z" fill="none" stroke="#fff" stroke-width="3" stroke-linejoin="round"/></svg>
            </button>
            <button aria-label="Plus d'options">
              <svg width="14" height="30" viewBox="0 0 14 30" aria-hidden="true"><g fill="#fff"><circle cx="7" cy="5" r="3"/><circle cx="7" cy="15" r="3"/><circle cx="7" cy="25" r="3"/></g></svg>
            </button>
          </div>
        </div>
        <app-header></app-header>
        <div class="body">
          <side-nav></side-nav>
          <balance-page></balance-page>
        </div>
        <button class="fab" aria-label="Paramètres">${icon("gear", 32)}</button>
      </div>
      <app-dock></app-dock>`;
  }
}
